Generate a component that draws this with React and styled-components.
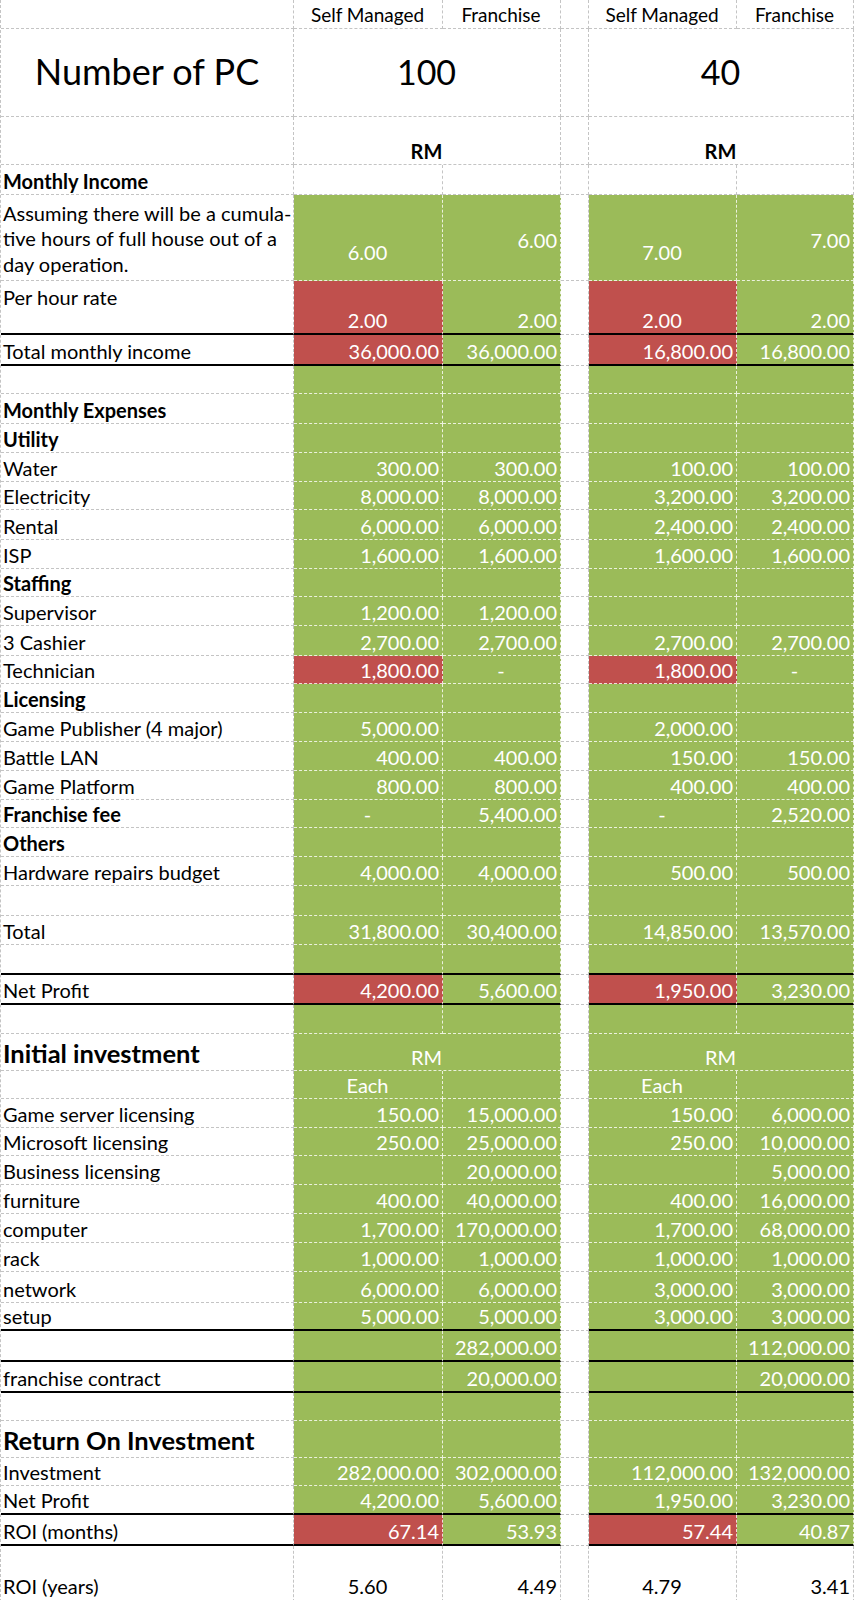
import { Fragment } from 'react';
import styled, { createGlobalStyle } from 'styled-components';

const GREEN = '#9bbb59';
const RED = '#c0504d';
const GRID = '#c4c4c4';
const GRID_ON_FILL = 'rgba(255, 255, 255, 0.8)';
const FONT = "Lato, 'Liberation Sans', sans-serif";
const BASE = 20;

const GlobalStyle = createGlobalStyle`
  html, body {
    margin: 0;
    padding: 0;
    background: #ffffff;
  }
`;

const fills = { none: '#ffffff', green: GREEN, red: RED };

// value cell helpers
const g = (t, extra = {}) => ({ t, tone: 'green', align: 'right', ...extra });
const r = (t, extra = {}) => ({ t, tone: 'red', align: 'right', ...extra });
const gc = (t, extra = {}) => ({ t, tone: 'green', align: 'center', ...extra });
const rc = (t, extra = {}) => ({ t, tone: 'red', align: 'center', ...extra });
const w = (t, extra = {}) => ({ t, tone: 'none', align: 'center', ...extra });
const e = { t: '', tone: 'green' };
const blank = { t: '', tone: 'none' };
const dash = gc('-');

const row = (h, label, cells, opts = {}) => ({ h, label, cells, ...opts });
const greenRow = (h, label, opts) => row(h, label, [e, e, e, e], opts);

const rows = [
  row(29, '', [w('Self Managed', { size: 19 }), w('Franchise', { size: 19 }), w('Self Managed', { size: 19 }), w('Franchise', { size: 19 })]),
  row(88, 'Number of PC', [w('100', { size: 34, v: 'center' }), w('40', { size: 34, v: 'center' })], {
    merged: true,
    kind: 'huge',
  }),
  row(48, '', [w('RM', { bold: true }), w('RM', { bold: true })], { merged: true }),
  row(30, 'Monthly Income', [blank, blank, blank, blank], { kind: 'bold' }),
  row(
    86,
    ['Assuming there will be a cumula-', 'tive hours of full house out of a', 'day operation.'],
    [gc('6.00', { pb: 16 }), g('6.00', { pb: 28 }), gc('7.00', { pb: 16 }), g('7.00', { pb: 28 })],
    { kind: 'wrap', lv: 'center', lpt: 4 }
  ),
  row(54, 'Per hour rate', [rc('2.00'), g('2.00'), rc('2.00'), g('2.00')], { rule: true, lv: 'start', lpt: 4 }),
  row(31, 'Total monthly income', [r('36,000.00'), g('36,000.00'), r('16,800.00'), g('16,800.00')], {
    rule: true,
  }),
  greenRow(28, ''),
  greenRow(30, 'Monthly Expenses', { kind: 'bold' }),
  greenRow(29, 'Utility', { kind: 'bold' }),
  row(29, 'Water', [g('300.00'), g('300.00'), g('100.00'), g('100.00')]),
  row(28, 'Electricity', [g('8,000.00'), g('8,000.00'), g('3,200.00'), g('3,200.00')]),
  row(30, 'Rental', [g('6,000.00'), g('6,000.00'), g('2,400.00'), g('2,400.00')]),
  row(29, 'ISP', [g('1,600.00'), g('1,600.00'), g('1,600.00'), g('1,600.00')]),
  greenRow(28, 'Staffing', { kind: 'bold' }),
  row(29, 'Supervisor', [g('1,200.00'), g('1,200.00'), e, e]),
  row(30, '3 Cashier', [g('2,700.00'), g('2,700.00'), g('2,700.00'), g('2,700.00')]),
  row(28, 'Technician', [r('1,800.00'), dash, r('1,800.00'), dash]),
  greenRow(29, 'Licensing', { kind: 'bold' }),
  row(29, 'Game Publisher (4 major)', [g('5,000.00'), e, g('2,000.00'), e]),
  row(29, 'Battle LAN', [g('400.00'), g('400.00'), g('150.00'), g('150.00')]),
  row(29, 'Game Platform', [g('800.00'), g('800.00'), g('400.00'), g('400.00')]),
  row(28, 'Franchise fee', [dash, g('5,400.00'), dash, g('2,520.00')], { kind: 'bold' }),
  greenRow(29, 'Others', { kind: 'bold' }),
  row(29, 'Hardware repairs budget', [g('4,000.00'), g('4,000.00'), g('500.00'), g('500.00')]),
  greenRow(30, ''),
  row(29, 'Total', [g('31,800.00'), g('30,400.00'), g('14,850.00'), g('13,570.00')]),
  greenRow(30, '', { rule: true }),
  row(30, 'Net Profit', [r('4,200.00'), g('5,600.00'), r('1,950.00'), g('3,230.00')], { rule: true }),
  greenRow(29, ''),
  row(37, 'Initial investment', [gc('RM'), gc('RM')], { merged: true, kind: 'title' }),
  row(28, '', [gc('Each'), e, gc('Each'), e]),
  row(29, 'Game server licensing', [g('150.00'), g('15,000.00'), g('150.00'), g('6,000.00')]),
  row(28, 'Microsoft licensing', [g('250.00'), g('25,000.00'), g('250.00'), g('10,000.00')]),
  row(29, 'Business licensing', [e, g('20,000.00'), e, g('5,000.00')]),
  row(29, 'furniture', [g('400.00'), g('40,000.00'), g('400.00'), g('16,000.00')]),
  row(29, 'computer', [g('1,700.00'), g('170,000.00'), g('1,700.00'), g('68,000.00')]),
  row(29, 'rack', [g('1,000.00'), g('1,000.00'), g('1,000.00'), g('1,000.00')]),
  row(31, 'network', [g('6,000.00'), g('6,000.00'), g('3,000.00'), g('3,000.00')]),
  row(28, 'setup', [g('5,000.00'), g('5,000.00'), g('3,000.00'), g('3,000.00')], { rule: true }),
  row(31, '', [e, g('282,000.00'), e, g('112,000.00')], { rule: true }),
  row(31, 'franchise contract', [e, g('20,000.00'), e, g('20,000.00')], { rule: true }),
  greenRow(28, ''),
  greenRow(37, 'Return On Investment', { kind: 'title' }),
  row(28, 'Investment', [g('282,000.00'), g('302,000.00'), g('112,000.00'), g('132,000.00')]),
  row(29, 'Net Profit', [g('4,200.00'), g('5,600.00'), g('1,950.00'), g('3,230.00')], { rule: true }),
  row(31, 'ROI (months)', [r('67.14'), g('53.93'), r('57.44'), g('40.87')], { rule: true }),
  row(
    56,
    'ROI (years)',
    [w('5.60', { pb: 3 }), w('4.49', { align: 'right', pb: 3 }), w('4.79', { pb: 3 }), w('3.41', { align: 'right', pb: 3 })],
    { lpb: 3 }
  ),
];

const labelSizes = { huge: 36, title: 25.5, bold: BASE, wrap: BASE, normal: BASE };

const App = () => {
  const renderValue = (cell, h, rule, span, key) => (
    <Value
      key={key}
      $h={h}
      $span={span}
      $tone={cell.tone}
      $align={cell.align}
      $v={cell.v}
      $pb={cell.pb}
      $size={cell.size}
      $bold={cell.bold}
      $rule={rule}
    >
      {cell.t}
    </Value>
  );

  return (
    <>
      <GlobalStyle />
      <Sheet>
        {rows.map((rw, i) => {
          const kind = rw.kind || 'normal';
          const [b, c, ee, f] = rw.cells;
          return (
            <Fragment key={i}>
              <Label
                $h={rw.h}
                $kind={kind}
                $size={labelSizes[kind]}
                $rule={rw.rule}
                $v={kind === 'huge' ? 'center' : rw.lv || 'end'}
                $pt={rw.lpt}
                $pb={rw.lpb}
              >
                {Array.isArray(rw.label)
                  ? rw.label.map((line, j) => <Line key={j}>{line}</Line>)
                  : rw.label}
              </Label>
              {rw.merged ? (
                <>
                  {renderValue(b, rw.h, rw.rule, 2, 'bc')}
                  <Gap $h={rw.h} />
                  {renderValue(c, rw.h, rw.rule, 2, 'ef')}
                </>
              ) : (
                <>
                  {renderValue(b, rw.h, rw.rule, 1, 'b')}
                  {renderValue(c, rw.h, rw.rule, 1, 'c')}
                  <Gap $h={rw.h} />
                  {renderValue(ee, rw.h, rw.rule, 1, 'e')}
                  {renderValue(f, rw.h, rw.rule, 1, 'f')}
                </>
              )}
            </Fragment>
          );
        })}
      </Sheet>
    </>
  );
};

const Sheet = styled.div`
  display: grid;
  grid-template-columns: 293px 149px 118px 28px 148px 117px;
  width: 854px;
  border-left: 1px dashed ${GRID};
  font-family: ${FONT};
  color: #000000;
`;

const Label = styled.div`
  box-sizing: border-box;
  height: ${p => p.$h}px;
  display: flex;
  flex-direction: column;
  justify-content: ${p => (p.$v === 'center' ? 'center' : p.$v === 'start' ? 'flex-start' : 'flex-end')};
  align-items: ${p => (p.$kind === 'huge' ? 'center' : 'flex-start')};
  padding: ${p => p.$pt ?? 0}px 2px ${p => p.$pb ?? 1}px 2px;
  border-right: 1px dashed ${GRID};
  border-bottom: ${p => (p.$rule ? '2px solid #000000' : `1px dashed ${GRID}`)};
  font-size: ${p => p.$size}px;
  font-weight: ${p => (p.$kind === 'bold' || p.$kind === 'title' ? 700 : 400)};
  line-height: ${p => (p.$kind === 'wrap' ? '25.5px' : 1.2)};
  white-space: nowrap;
`;

const Line = styled.span`
  display: block;
`;

const Value = styled.div`
  box-sizing: border-box;
  height: ${p => p.$h}px;
  grid-column: span ${p => p.$span};
  display: flex;
  align-items: ${p => (p.$v === 'center' ? 'center' : 'flex-end')};
  justify-content: ${p => (p.$align === 'right' ? 'flex-end' : 'center')};
  padding: 0 3px ${p => p.$pb ?? 1}px 2px;
  background: ${p => fills[p.$tone]};
  color: ${p => (p.$tone === 'none' ? '#000000' : '#ffffff')};
  border-right: 1px dashed ${p => (p.$tone === 'none' ? GRID : GRID_ON_FILL)};
  border-bottom: ${p =>
    p.$rule ? '2px solid #000000' : `1px dashed ${p.$tone === 'none' ? GRID : GRID_ON_FILL}`};
  font-size: ${p => p.$size || BASE}px;
  font-weight: ${p => (p.$bold ? 700 : 400)};
  line-height: 1.2;
  white-space: nowrap;
`;

const Gap = styled.div`
  box-sizing: border-box;
  height: ${p => p.$h}px;
  background: #ffffff;
  border-right: 1px dashed ${GRID};
  border-bottom: 1px dashed ${GRID};
`;

export default App;
